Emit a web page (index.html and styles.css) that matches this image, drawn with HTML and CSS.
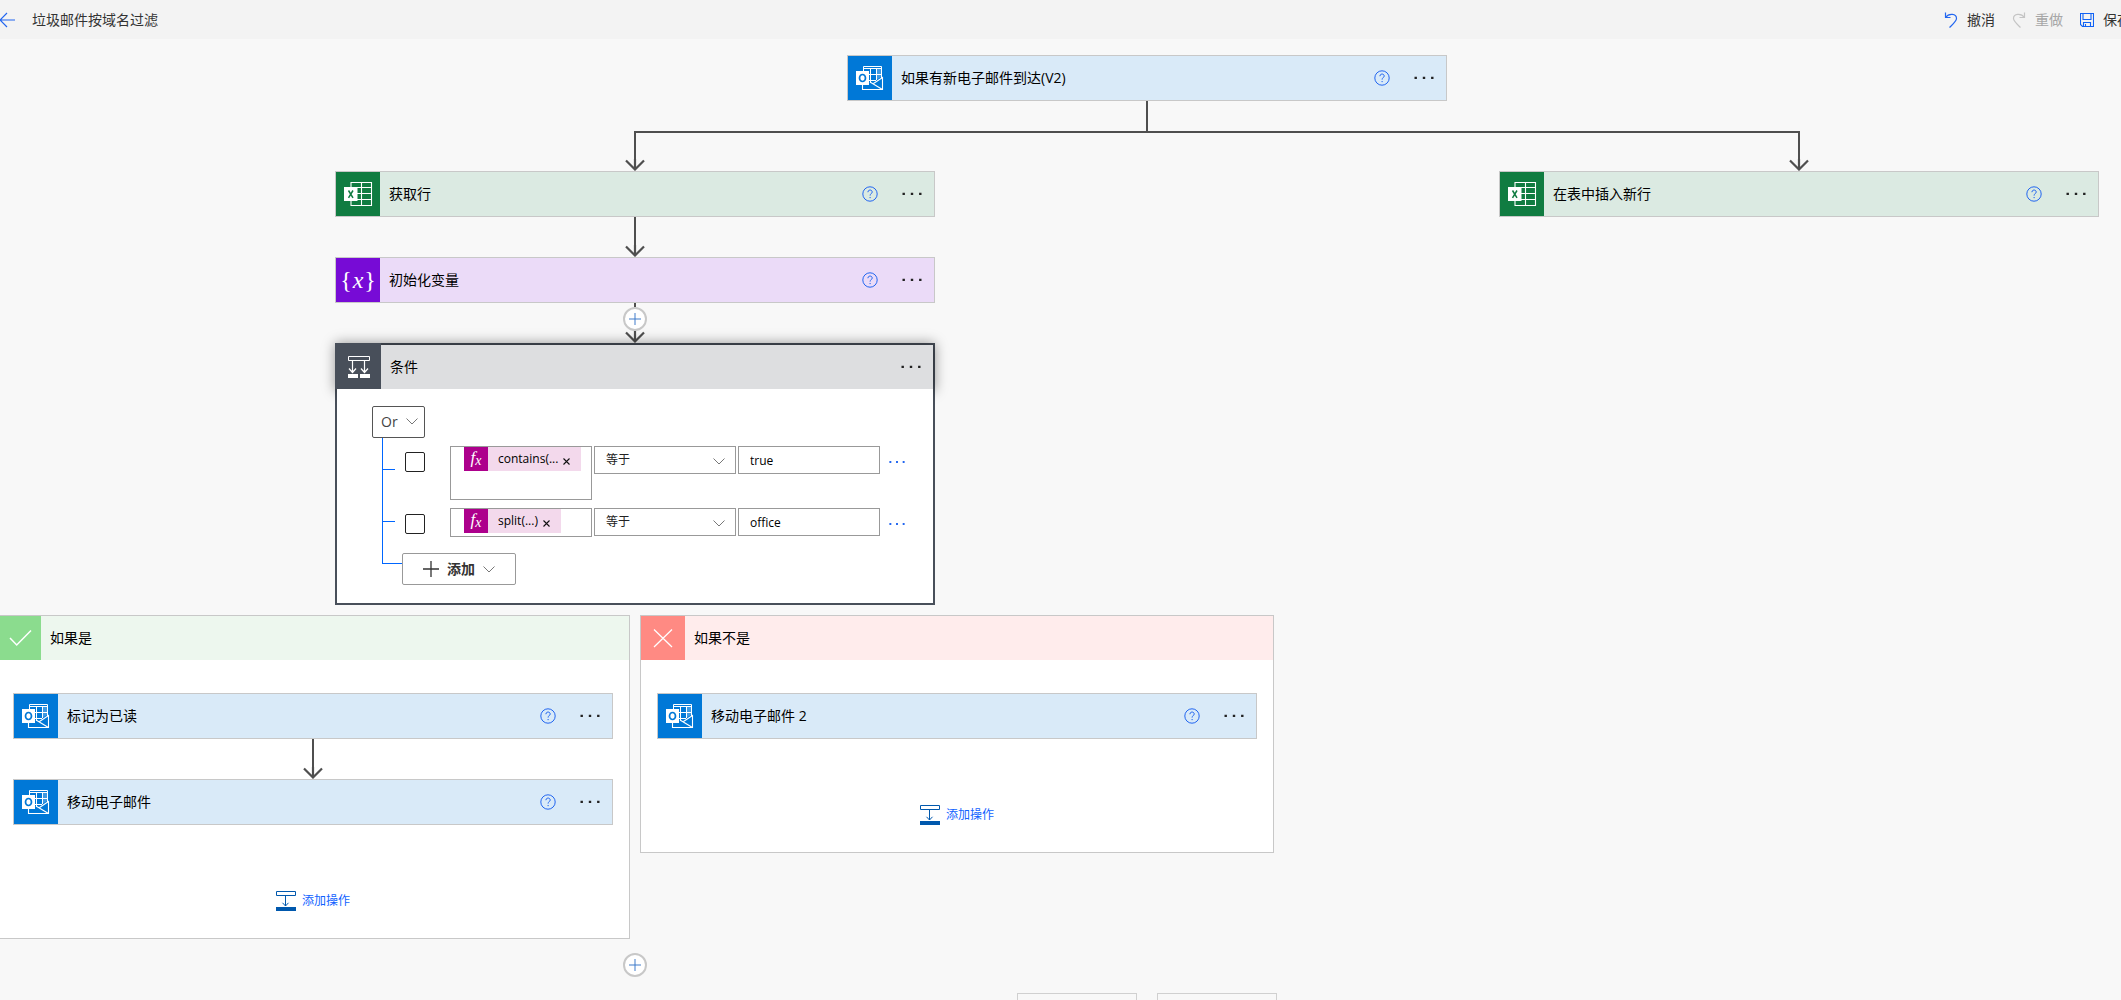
FILE: index.html
```html
<!DOCTYPE html>
<html lang="zh-CN">
<head>
<meta charset="utf-8">
<title>垃圾邮件按域名过滤</title>
<link rel="stylesheet" href="styles.css">
</head>
<body>
<svg class="sprite" width="0" height="0">
  <symbol id="outlook" viewBox="0 0 44 44">
    <path d="M15.500 10.500H33.500V22M15.500 12.500H33.500M15.500 10.500V15M22.500 12.500V27M28.500 12.500V24M20 18.500H33.500M20 24.500H28" fill="none" stroke="#fff" stroke-width="1"/>
    <path d="M28 13H33V21L28 24Z" fill="#fff" opacity=".25"/>
    <path d="M14.500 28V33.500H34.500V21.500L25.500 27.500M22 26L34 33.300" fill="none" stroke="#fff" stroke-width="1.100"/>
    <path d="M8 15H21V29H8Z" fill="#fff"/>
    <ellipse cx="14.500" cy="22" rx="3" ry="3.500" fill="none" stroke="#0078d7" stroke-width="1.700"/>
  </symbol>
  <symbol id="excel" viewBox="0 0 44 44">
    <path d="M15 10.500H35.500V33.500H15ZM25.500 11V33M20 15.500H35M20 21.500H35M20 27.500H35" fill="none" stroke="#fff" stroke-width="1.100"/>
    <path d="M8 15H21.500V29H8Z" fill="#fff"/>
    <path d="M12.500 18.500L17 25.800M17 18.500L12.500 25.800" stroke="#107c41" stroke-width="1.500"/>
  </symbol>
  <symbol id="condition" viewBox="0 0 46 46">
    <path d="M13.500 13.500H34.500V17.500H13.500Z" fill="none" stroke="#fff"/>
    <path d="M17.500 18V29M29.500 18V29M14 25.500L17.500 29.500L21 25.500M26 25.500L29.500 29.500L33 25.500" fill="none" stroke="#fff" stroke-width="1.200"/>
    <path d="M13 31H23V35H13ZM25 31H35V35H25Z" fill="#fff"/>
  </symbol>
  <symbol id="check" viewBox="0 0 44 44"><path d="M13 22L19.700 29L34 14.500" fill="none" stroke="#fff" stroke-width="1.500"/></symbol>
  <symbol id="cross" viewBox="0 0 44 44"><path d="M13 13.500L31 31M31 13.500L13 31" fill="none" stroke="#fff" stroke-width="1.300"/></symbol>
  <symbol id="help" viewBox="0 0 16 16">
    <circle cx="8" cy="8" r="7.200" fill="none" stroke="currentColor" stroke-width="1"/>
    <path d="M5.900 6.200C5.900 3.300 10.200 3.400 10.200 6C10.200 7.600 8.100 7.700 8.100 9.600" fill="none" stroke="currentColor" stroke-width="1"/>
    <circle cx="8.100" cy="11.600" r=".7" fill="currentColor"/>
  </symbol>
  <symbol id="dots" viewBox="0 0 20 4"><path d="M.5 .7H2.900V3.100H.5ZM8.800 .7H11.200V3.100H8.800ZM17.100 .7H19.500V3.100H17.100Z" fill="currentColor"/></symbol>
  <symbol id="head" viewBox="0 0 20 12"><path d="M10 0V10M1 1.500L10 10.500L19 1.500" fill="none" stroke="#4f4f4f" stroke-width="2.200"/></symbol>
  <symbol id="chevron" viewBox="0 0 12 7"><path d="M.5 .5L6 6L11.500 .5" fill="none" stroke="#777" stroke-width="1"/></symbol>
  <symbol id="plus" viewBox="0 0 16 16"><path d="M8 0V16M0 8H16" stroke="currentColor" stroke-width="1.300"/></symbol>
  <symbol id="insert" viewBox="0 0 20 20">
    <path d="M.5 .5H19.500V4.500H.5Z" fill="none" stroke="#0058ad"/>
    <path d="M9.500 5V15M6.500 11.800L9.500 15L12.500 11.800" fill="none" stroke="#0058ad"/>
    <path d="M0 16H20V20H0Z" fill="#0058ad"/>
  </symbol>
</svg>

<div class="app">
  <header class="topbar">
    <a class="back" href="#"><svg width="16" height="16" viewBox="0 0 16 16"><path d="M8 1L1 8L8 15M1 8H16" fill="none" stroke="currentColor" stroke-width="1.200"/></svg></a>
    <h1 class="title">垃圾邮件按域名过滤</h1>
    <div class="tools">
      <button class="tool"><svg width="14" height="16" viewBox="0 0 14 16"><path d="M1.500 .5V5.500H6.500M1.500 5.500C5 .8 12.500 1.500 12.500 6.500C12.500 9 11 10.200 5.500 15.500" fill="none" stroke="#2266f0" stroke-width="1.200"/></svg>撤消</button>
      <button class="tool" disabled><svg width="14" height="16" viewBox="0 0 14 16"><path d="M12.500 .5V5.500H7.500M12.500 5.500C9 .8 1.500 1.500 1.500 6.500C1.500 9 3 10.200 8.500 15.500" fill="none" stroke="#c4c4c4" stroke-width="1.200"/></svg>重做</button>
      <button class="tool"><svg width="14" height="14" viewBox="0 0 14 14"><path d="M.5 .5H13.500V13.500H2.500L.5 11.500ZM3 .5V6.500H11V.5M3.500 13.500V9.500H10.500V13.500M5.500 11V13.500" fill="none" stroke="#1062f5" stroke-width="1.100"/></svg>保存</button>
    </div>
  </header>

  <main class="canvas">
    <div class="flow">
      <article class="card mail">
        <svg class="badge"><use href="#outlook"/></svg>
        <h2 class="name">如果有新电子邮件到达(V2)</h2>
        <button class="help"><svg width="16" height="16"><use href="#help"/></svg></button>
        <button class="more"><svg width="20" height="4"><use href="#dots"/></svg></button>
      </article>
      <div class="stem"></div>
      <div class="split"></div>

      <div class="branches">
        <section class="branch">
          <div class="arrow short"><svg width="20" height="12"><use href="#head"/></svg></div>
          <article class="card sheet">
            <svg class="badge"><use href="#excel"/></svg>
            <h2 class="name">获取行</h2>
            <button class="help"><svg width="16" height="16"><use href="#help"/></svg></button>
            <button class="more"><svg width="20" height="4"><use href="#dots"/></svg></button>
          </article>
          <div class="arrow"><svg width="20" height="12"><use href="#head"/></svg></div>
          <article class="card variable">
            <span class="badge braces">{<i>x</i>}</span>
            <h2 class="name">初始化变量</h2>
            <button class="help"><svg width="16" height="16"><use href="#help"/></svg></button>
            <button class="more"><svg width="20" height="4"><use href="#dots"/></svg></button>
          </article>
          <div class="arrow">
            <button class="add-step"><svg width="12" height="12"><use href="#plus"/></svg></button>
            <svg width="20" height="12"><use href="#head"/></svg>
          </div>

          <article class="condition">
            <header class="condition-head">
              <svg class="badge"><use href="#condition"/></svg>
              <h2 class="name">条件</h2>
              <button class="more"><svg width="20" height="4"><use href="#dots"/></svg></button>
            </header>
            <div class="condition-body">
              <label class="picker logic">
                <select><option>Or</option></select>
                <svg width="12" height="7"><use href="#chevron"/></svg>
              </label>
              <div class="rules">
                <div class="rule tall">
                  <span class="tick"></span>
                  <input class="box" type="checkbox">
                  <div class="field"><span class="token"><span class="fx"><i>f</i><i class="sub">x</i></span><span>contains(...</span><button class="remove"><svg width="7" height="7" viewBox="0 0 7 7"><path d="M.5 .5L6.500 6.500M6.500 .5L.5 6.500" stroke="#111" stroke-width="1.100"/></svg></button></span></div>
                  <label class="picker"><select><option>等于</option></select><svg width="12" height="7"><use href="#chevron"/></svg></label>
                  <input class="value" type="text" value="true">
                  <button class="rule-more"><svg width="16" height="4"><use href="#dots"/></svg></button>
                </div>
                <div class="rule">
                  <span class="tick"></span>
                  <input class="box" type="checkbox">
                  <div class="field"><span class="token"><span class="fx"><i>f</i><i class="sub">x</i></span><span>split(...)</span><button class="remove"><svg width="7" height="7" viewBox="0 0 7 7"><path d="M.5 .5L6.500 6.500M6.500 .5L.5 6.500" stroke="#111" stroke-width="1.100"/></svg></button></span></div>
                  <label class="picker"><select><option>等于</option></select><svg width="12" height="7"><use href="#chevron"/></svg></label>
                  <input class="value" type="text" value="office">
                  <button class="rule-more"><svg width="16" height="4"><use href="#dots"/></svg></button>
                </div>
              </div>
              <div class="add-row">
                <span class="elbow"></span>
                <button class="add-rule"><svg width="16" height="16"><use href="#plus"/></svg>添加<svg width="12" height="7"><use href="#chevron"/></svg></button>
              </div>
            </div>
          </article>

          <div class="outcomes">
            <section class="outcome yes">
              <header class="outcome-head"><svg class="badge"><use href="#check"/></svg><h2 class="name">如果是</h2></header>
              <div class="outcome-body">
                <article class="card mail">
                  <svg class="badge"><use href="#outlook"/></svg>
                  <h3 class="name">标记为已读</h3>
                  <button class="help"><svg width="16" height="16"><use href="#help"/></svg></button>
                  <button class="more"><svg width="20" height="4"><use href="#dots"/></svg></button>
                </article>
                <div class="arrow"><svg width="20" height="12"><use href="#head"/></svg></div>
                <article class="card mail">
                  <svg class="badge"><use href="#outlook"/></svg>
                  <h3 class="name">移动电子邮件</h3>
                  <button class="help"><svg width="16" height="16"><use href="#help"/></svg></button>
                  <button class="more"><svg width="20" height="4"><use href="#dots"/></svg></button>
                </article>
                <a class="add-action" href="#"><svg width="20" height="20"><use href="#insert"/></svg>添加操作</a>
              </div>
            </section>
            <section class="outcome no">
              <header class="outcome-head"><svg class="badge"><use href="#cross"/></svg><h2 class="name">如果不是</h2></header>
              <div class="outcome-body">
                <article class="card mail">
                  <svg class="badge"><use href="#outlook"/></svg>
                  <h3 class="name">移动电子邮件 2</h3>
                  <button class="help"><svg width="16" height="16"><use href="#help"/></svg></button>
                  <button class="more"><svg width="20" height="4"><use href="#dots"/></svg></button>
                </article>
                <a class="add-action" href="#"><svg width="20" height="20"><use href="#insert"/></svg>添加操作</a>
              </div>
            </section>
          </div>
          <button class="add-step last"><svg width="12" height="12"><use href="#plus"/></svg></button>
        </section>

        <section class="branch wide">
          <div class="arrow short"><svg width="20" height="12"><use href="#head"/></svg></div>
          <article class="card sheet">
            <svg class="badge"><use href="#excel"/></svg>
            <h2 class="name">在表中插入新行</h2>
            <button class="help"><svg width="16" height="16"><use href="#help"/></svg></button>
            <button class="more"><svg width="20" height="4"><use href="#dots"/></svg></button>
          </article>
        </section>
      </div>

      <div class="footer-actions">
        <button class="footer-button"></button>
        <button class="footer-button"></button>
      </div>
    </div>
  </main>
</div>
</body>
</html>
```
FILE: styles.css
```css
* { box-sizing: border-box; }

body {
  margin: 0;
  background: #f8f8f8;
  color: #111;
  font: 14px/20px "Open Sans", "Noto Sans CJK SC", sans-serif;
}

button, select, input { font: inherit; color: inherit; margin: 0; }
button { padding: 0; border: 0; background: none; cursor: pointer; }
svg { display: block; flex: none; }
.sprite { position: absolute; }

.app { display: flex; flex-direction: column; height: 100vh; }

/* Top bar */
.topbar {
  display: flex;
  align-items: center;
  flex: none;
  height: 39px;
  overflow: hidden;
  background: #f3f3f3;
  color: #333;
}
.back { margin-left: -1px; color: #2266f0; }
.title { margin: 0 0 0 17px; font-size: 14px; font-weight: 400; }
.tools { display: flex; gap: 17px; margin: 0 -10px 0 auto; }
.tool { display: flex; align-items: center; gap: 9px; white-space: nowrap; }
.tool:disabled { color: #a6a6a6; }

/* Canvas */
.canvas { flex: 1; min-height: 0; overflow: auto; scrollbar-width: none; }
.flow {
  display: flex;
  flex-direction: column;
  align-items: center;
  width: max-content;
  margin-left: -4px;
  padding-top: 16px;
}

/* Action cards */
.card {
  display: flex;
  align-items: center;
  width: 600px;
  height: 46px;
  border: 1px solid #c8c8c8;
}
.badge { flex: none; width: 44px; height: 44px; }
.name { flex: 1; margin: 0; padding-left: 9px; font-size: 14px; font-weight: 400; color: #000; }
.help { color: #2266f0; }
.more { margin: 0 12px 0 24px; color: #222; }

.mail { background: #d9eaf8; }
.mail .badge { background: #0078d7; }
.sheet { background: #dbeae2; }
.sheet .badge { background: #107c41; }
.variable { background: #ebdbf8; }
.variable .badge { background: #770bd6; }
.braces {
  display: flex;
  align-items: center;
  justify-content: center;
  gap: 1px;
  color: #fff;
  font: 24px/40px "Liberation Serif", serif;
}

/* Connectors */
.stem { width: 2px; height: 30px; background: #4f4f4f; }
.split { align-self: stretch; height: 2px; margin: 0 498px 0 638px; background: #4f4f4f; }
.arrow { display: flex; flex-direction: column; align-items: center; height: 40px; }
.arrow.short { height: 38px; }
.arrow::before { content: ""; flex: 1; width: 2px; background: #4f4f4f; }
.add-step {
  display: flex;
  align-items: center;
  justify-content: center;
  flex: none;
  width: 24px;
  height: 24px;
  border: 2px solid #c8c8c8;
  border-radius: 50%;
  background: #fff;
  color: #3a78c8;
}
.add-step.last { margin-top: 14px; }

.branches { display: flex; gap: 26px; }
.branch { display: flex; flex-direction: column; align-items: center; }
.branch.wide { padding: 0 199px; }

/* Condition */
.condition { width: 600px; border: 2px solid #484f5a; background: #fff; }
.condition-head {
  display: flex;
  align-items: center;
  height: 44px;
  background: #dddee0;
  box-shadow: 0 0 12px 2px rgba(0, 0, 0, .4);
}
.condition-head .badge { width: 46px; height: 46px; margin: -2px 0 0 -2px; background: #484f5a; }
.condition-body { position: relative; padding: 17px 0 18px 35px; background: #fff; }

.picker { position: relative; display: block; width: 142px; height: 28px; }
.picker select {
  width: 100%;
  height: 100%;
  padding: 0 11px;
  appearance: none;
  border: 1px solid #999;
  border-radius: 0;
  background: #fff;
  color: #222;
}
.picker svg { position: absolute; right: 11px; top: 12px; pointer-events: none; }
.logic { width: 53px; height: 32px; }
.logic select { padding: 0 8px; border-color: #555; border-radius: 2px; color: #444; }
.logic svg { right: 7px; }

.rules { margin-left: 10px; padding: 8px 0 16px; border-left: 1px solid #0066ff; font-size: 12px; }
.rule { display: flex; align-items: flex-start; gap: 2px; }
.rule + .rule { margin-top: 8px; }
.tick { width: 12px; height: 1px; margin-top: 13px; background: #0066ff; }
.tall .tick { margin-top: 23px; }
.box {
  width: 20px;
  height: 20px;
  margin: 6px 23px 0 8px;
  appearance: none;
  border: 1px solid #222;
  border-radius: 2px;
  background: #fff;
}
.field { width: 142px; height: 29px; padding-left: 13px; border: 1px solid #999; }
.tall .field { height: 54px; }
.token {
  display: inline-flex;
  align-items: center;
  height: 24px;
  padding-right: 11px;
  background: #f3d9ec;
  color: #000;
  line-height: 24px;
  vertical-align: top;
}
.fx {
  display: flex;
  justify-content: center;
  width: 24px;
  height: 24px;
  margin-right: 10px;
  background: #ad008c;
  color: #fff;
  font: 17px/22px "Liberation Serif", serif;
}
.sub { font-size: 14px; line-height: 28px; }
.remove { margin: 4px 0 0 5px; }
.value {
  width: 142px;
  height: 28px;
  padding: 0 11px;
  border: 1px solid #999;
  background: #fff;
  color: #000;
}
.rule-more { margin: 14px 0 0 7px; color: #2266f0; }

.add-row { display: flex; margin-left: 10px; }
.elbow { width: 20px; height: 11px; border: solid #0066ff; border-width: 0 0 1px 1px; }
.add-rule {
  display: flex;
  align-items: center;
  gap: 8px;
  height: 32px;
  padding: 0 20px;
  border: 1px solid #999;
  border-radius: 2px;
  background: #fff;
  color: #333;
  font-weight: 600;
}

/* Outcomes */
.outcomes { display: flex; align-items: flex-start; gap: 10px; margin-top: 10px; }
.outcome { border: 1px solid #c8c8c8; background: #fff; }
.outcome-head { display: flex; align-items: center; height: 44px; }
.yes .outcome-head { background: #edf7ee; }
.yes .outcome-head .badge { background: #8bdc8e; }
.no .outcome-head { background: #ffecec; }
.no .outcome-head .badge { background: #ff8a83; }
.outcome-body {
  display: flex;
  flex-direction: column;
  align-items: center;
  padding: 33px 16px 27px;
}
.add-action {
  display: flex;
  align-items: center;
  gap: 6px;
  margin-top: 66px;
  color: #1062ff;
  font-size: 12px;
  text-decoration: none;
}

.footer-actions { display: flex; gap: 20px; margin-top: 16px; }
.footer-button { width: 120px; height: 32px; border: 1px solid #d0d0d0; }
```
